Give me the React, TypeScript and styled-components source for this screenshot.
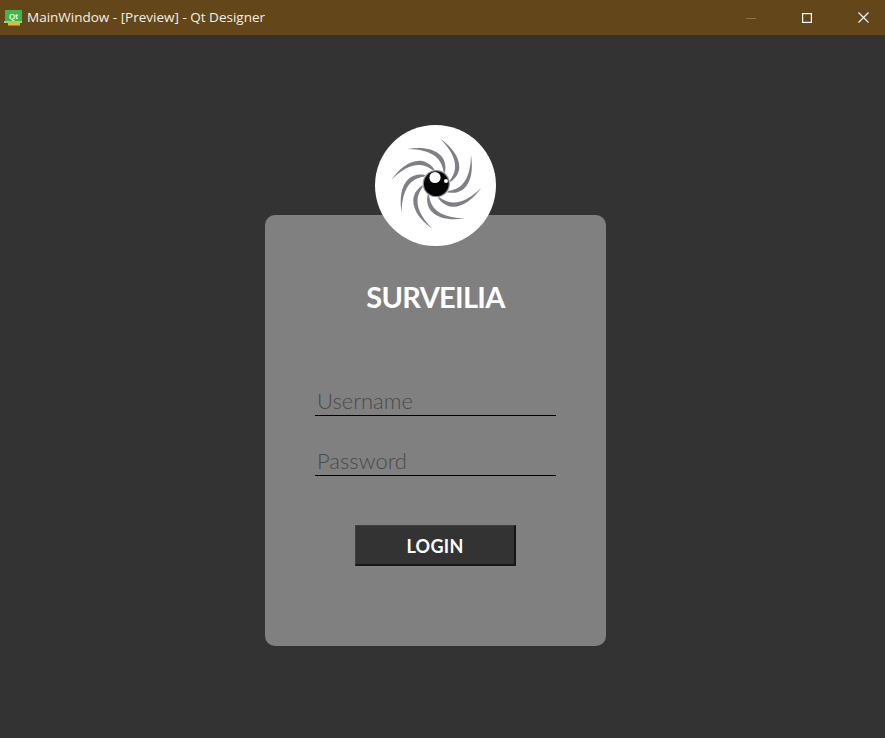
import React from "react";
import styled, { createGlobalStyle } from "styled-components";

const Global = createGlobalStyle`
  html, body { margin: 0; padding: 0; height: 100%; background: #333333; overflow: hidden; }
  #root { height: 100%; }
`;

const Window = styled.div`
  display: flex;
  flex-direction: column;
  width: 885px;
  height: 738px;
  background: #333333;
  overflow: hidden;
`;

const TitleBar = styled.header`
  display: flex;
  align-items: center;
  height: 35px;
  flex: none;
  background: #63461a;
  padding-left: 4px;
`;

const AppIcon = styled.svg`
  width: 19px;
  height: 16px;
  flex: none;
  margin-top: 1px;
`;

const WindowTitle = styled.span`
  margin-left: 4px;
  flex: 1;
  font-family: "Open Sans", "Noto Sans", sans-serif;
  font-size: 13.5px;
  line-height: 35px;
  color: #f4f0e8;
`;

const Controls = styled.div`
  display: flex;
  align-items: center;
  margin-right: -6px;
`;

const ControlButton = styled.div`
  display: flex;
  align-items: center;
  justify-content: center;
  width: 56px;
  height: 35px;
`;

const Stage = styled.main`
  flex: 1;
  padding: 180px 0 0 265px;
`;

const Card = styled.section`
  position: relative;
  box-sizing: border-box;
  display: flex;
  flex-direction: column;
  align-items: center;
  width: 341px;
  height: 431px;
  padding-top: 64px;
  background: #808080;
  border-radius: 10px;
`;

const Avatar = styled.div`
  position: absolute;
  top: -90px;
  left: 110px;
  width: 121px;
  height: 121px;
  border-radius: 50%;
  background: #ffffff;
`;

const Brand = styled.h1`
  margin: 0;
  font-family: "Lato", "Liberation Sans", sans-serif;
  font-size: 29px;
  line-height: 36px;
  font-weight: 700;
  letter-spacing: -0.7px;
  color: #ffffff;
`;

const Fields = styled.div`
  display: flex;
  flex-direction: column;
  gap: 29px;
  margin-top: 70px;
`;

const Field = styled.input`
  box-sizing: border-box;
  display: block;
  width: 241px;
  height: 30px;
  margin-top: 1px;
  padding: 0 0 0 2px;
  background: transparent;
  border: 0;
  border-bottom: 1px solid #000000;
  outline: none;
  font-family: "Lato", "Liberation Sans", sans-serif;
  font-size: 22px;
  font-weight: 300;
  color: #4a4a4a;
  &::placeholder {
    color: #4a4a4a;
    opacity: 1;
  }
`;

const LoginButton = styled.button`
  box-sizing: border-box;
  display: block;
  width: 161px;
  height: 41px;
  margin-top: 49px;
  padding: 2px 0 0;
  background: #333333;
  border-style: solid;
  border-width: 1px 2px 2px 1px;
  border-color: #3f3f3f #161616 #161616 #3f3f3f;
  font-family: "Lato", "Liberation Sans", sans-serif;
  font-size: 18px;
  font-weight: 700;
  letter-spacing: 0.3px;
  color: #ffffff;
`;

const bladeAngles = [0, 45, 90, 135, 180, 225, 270, 315];

const EyeLogo = () => (
  <svg width="121" height="121" viewBox="-60.5 -60.5 121 121">
    <defs>
      <filter id="soft" x="-20%" y="-20%" width="140%" height="140%">
        <feGaussianBlur stdDeviation="0.45" />
      </filter>
    </defs>
    <g transform="translate(0.8 -1.8)">
      <g fill="#7f7f85" filter="url(#soft)">
        {bladeAngles.map((a) => (
          <path
            key={a}
            transform={`rotate(${a})`}
            d="M4 -45 C15 -37 23.5 -27 23 -16 C22.5 -10 19 -4 11 0 C15 -5 18.6 -10 18.8 -17 C19 -26 13 -36 4 -45 Z"
          />
        ))}
      </g>
      <circle r="14" fill="#ffffff" />
      <circle r="13.6" fill="#8e8e92" />
      <circle r="12.4" fill="#050505" />
      <circle cx="-1.3" cy="-6.2" r="5.6" fill="#ffffff" />
      <circle cx="9.7" cy="-2.7" r="2" fill="#ffffff" />
    </g>
  </svg>
);

export default function App() {
  return (
    <Window>
      <Global />
      <TitleBar>
        <AppIcon viewBox="0 0 19 16">
          <rect x="1" y="0" width="17" height="12" fill="#3fb54a" />
          <rect x="0" y="11" width="18" height="2" fill="#8fd08a" />
          <rect x="4" y="12.5" width="12" height="3" fill="#f0b52a" />
          <text x="9.5" y="9" textAnchor="middle" fontFamily="Liberation Sans" fontSize="8" fontWeight="700" fill="#eaffea">Qt</text>
        </AppIcon>
        <WindowTitle>MainWindow - [Preview] - Qt Designer</WindowTitle>
        <Controls>
          <ControlButton>
            <svg width="10" height="10" viewBox="0 0 10 10"><path d="M0 5.5H10" stroke="#8b7550" strokeWidth="1" /></svg>
          </ControlButton>
          <ControlButton>
            <svg width="10" height="10" viewBox="0 0 10 10"><rect x="0.6" y="0.6" width="8.8" height="8.8" fill="none" stroke="#ffffff" strokeWidth="1.2" /></svg>
          </ControlButton>
          <ControlButton>
            <svg width="11" height="11" viewBox="0 0 11 11"><path d="M0.5 0.5L10.5 10.5M10.5 0.5L0.5 10.5" stroke="#ffffff" strokeWidth="1.1" /></svg>
          </ControlButton>
        </Controls>
      </TitleBar>
      <Stage>
        <Card>
          <Avatar><EyeLogo /></Avatar>
          <Brand>SURVEILIA</Brand>
          <Fields>
            <Field placeholder="Username" readOnly />
            <Field placeholder="Password" type="password" readOnly />
          </Fields>
          <LoginButton>LOGIN</LoginButton>
        </Card>
      </Stage>
    </Window>
  );
}
